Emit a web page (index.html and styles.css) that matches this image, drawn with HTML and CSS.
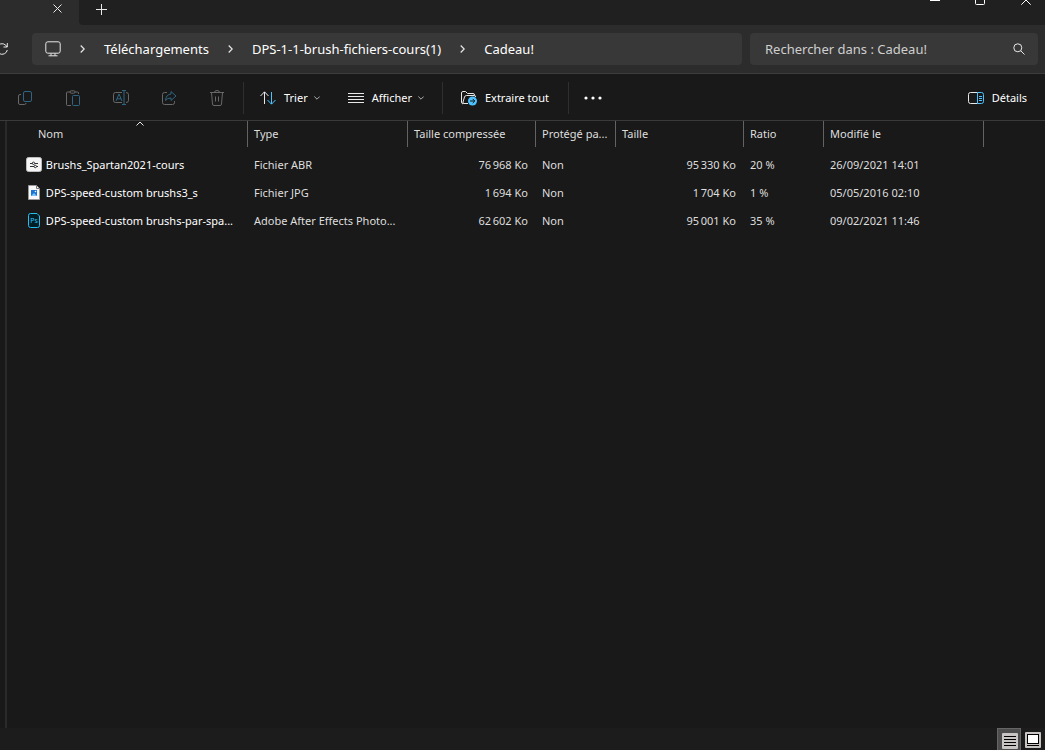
FILE: index.html
```html
<!DOCTYPE html>
<html lang="fr">
<head>
    <meta charset="UTF-8">
    <meta name="viewport" content="width=device-width, initial-scale=1.0">
    <title>Cadeau!</title>
    <link rel="stylesheet" href="styles.css">
</head>
<body>
    <header class="title-bar">
        <div class="tab">
            <button class="tab-close" aria-label="Fermer l'onglet">
                <svg width="9" height="9" viewBox="0 0 9 9"><path d="M.5 .5l8 8M8.500 .5l-8 8"/></svg>
            </button>
        </div>
        <div class="tab-strip">
            <button class="tab-new" aria-label="Nouvel onglet">
                <svg width="11" height="11" viewBox="0 0 11 11"><path d="M5.500 0v11M0 5.500h11"/></svg>
            </button>
            <div class="window-buttons">
                <button aria-label="Réduire"><svg width="10" height="5" viewBox="0 0 10 5"><path d="M0 .5h10"/></svg></button>
                <button aria-label="Agrandir"><svg width="10" height="5" viewBox="0 0 10 5"><path d="M.5 0v3.500q0 1 1 1h7q1 0 1-1V0"/></svg></button>
                <button aria-label="Fermer"><svg width="10" height="5" viewBox="0 0 10 5"><path d="M.3 4.700L5 0l4.700 4.700"/></svg></button>
            </div>
        </div>
    </header>

    <div class="nav-bar">
        <button class="refresh" aria-label="Actualiser">
            <svg width="12" height="14" viewBox="0 0 12 14"><path d="M11.300 1v4H7.500M11 5A5.300 5.300 0 1 0 11.300 8"/></svg>
        </button>
        <nav class="address">
            <svg class="pc" width="16" height="16" viewBox="0 0 16 16"><rect x=".8" y=".8" width="14.400" height="11.400" rx="2"/><path d="M6 12.500v2M10 12.500v2M3.500 14.800h9"/></svg>
            <svg class="sep" width="5" height="8" viewBox="0 0 5 8"><path d="M.7 .5L4.200 4 .7 7.500"/></svg>
            <a href="#">Téléchargements</a>
            <svg class="sep" width="5" height="8" viewBox="0 0 5 8"><path d="M.7 .5L4.200 4 .7 7.500"/></svg>
            <a href="#">DPS-1-1-brush-fichiers-cours(1)</a>
            <svg class="sep" width="5" height="8" viewBox="0 0 5 8"><path d="M.7 .5L4.200 4 .7 7.500"/></svg>
            <a href="#">Cadeau!</a>
        </nav>
        <div class="search">
            <input type="text" aria-label="Rechercher" placeholder="Rechercher dans : Cadeau!">
            <svg width="12" height="12" viewBox="0 0 12 12"><circle cx="4.800" cy="4.800" r="4"/><path d="M7.800 7.800l3.700 3.700"/></svg>
        </div>
    </div>

    <div class="toolbar">
        <button class="tool" disabled aria-label="Copier">
            <svg width="16" height="16" viewBox="0 0 16 16"><path d="M4 4.500H3q-1.500 0-1.500 1.500v7q0 1.500 1.500 1.500h4.500q1.500 0 1.500-1.500"/><rect class="blue" x="6.500" y="1.500" width="8" height="10" rx="1.500"/></svg>
        </button>
        <button class="tool" disabled aria-label="Coller">
            <svg width="16" height="16" viewBox="0 0 16 16"><path d="M5 2H2.500q-1 0-1 1v11.500q0 1 1 1H6M10 2h2.500q1 0 1 1v1"/><rect x="5" y=".8" width="5" height="2.400" rx="1.200"/><rect class="blue" x="7.500" y="5.500" width="7" height="10" rx="1"/></svg>
        </button>
        <button class="tool" disabled aria-label="Renommer">
            <svg width="16" height="16" viewBox="0 0 16 16"><path d="M9 2.500H2.500q-2 0-2 2v6q0 2 2 2H9M13 2.500q2.500 0 2.500 2v6q0 2-2.500 2"/><path class="blue" d="M3 11l3-7 3 7M4 8.800h4M9 .5h4M9 14.500h4M11 .5v14"/></svg>
        </button>
        <button class="tool" disabled aria-label="Partager">
            <svg width="16" height="16" viewBox="0 0 16 16"><path d="M6 2.500H3.500q-2 0-2 2v8q0 2 2 2h8q2 0 2-2V11"/><path class="blue" d="M10 1.500L15 6l-5 4.500V8Q6.500 7.800 4.500 10.500 5 4.500 10 4z"/></svg>
        </button>
        <button class="tool" disabled aria-label="Supprimer">
            <svg width="16" height="16" viewBox="0 0 16 16"><path d="M1 2.500h14M5.500 2.500q0-2 2.500-2t2.500 2M2.500 2.500l1 11.500q0 1.500 1.500 1.500h6q1.500 0 1.500-1.500l1-11.500M6.500 6.500v5M9.500 6.500v5"/></svg>
        </button>
        <span class="divider"></span>
        <button class="command">
            <svg width="16" height="14" viewBox="0 0 16 14"><path d="M4.500 13V1M.5 5l4-4.200 4 4.200"/><path class="blue" d="M11.500 1v12M7.500 9l4 4.200 4-4.200"/></svg>
            Trier
            <svg class="chevron" width="6" height="4" viewBox="0 0 6 4"><path d="M.3 .5L3 3.200 5.700 .5"/></svg>
        </button>
        <button class="command">
            <svg width="16" height="12" viewBox="0 0 16 12"><path d="M0 1.500h16M0 4.500h16M0 7.500h16M0 10.500h16"/></svg>
            Afficher
            <svg class="chevron" width="6" height="4" viewBox="0 0 6 4"><path d="M.3 .5L3 3.200 5.700 .5"/></svg>
        </button>
        <span class="divider"></span>
        <button class="command extract">
            <svg width="16" height="16" viewBox="0 0 16 16"><path d="M2 14q-1.500-.5-1.500-2V3q0-1.500 1.500-1.500h2.500l2 2H12q1.500 0 1.500 1.500M7 13.500H3q-1.500 0-1-1.500l1.500-5Q4 5.500 5.500 5.500H13q2 0 1.500 1.500"/><circle class="badge" cx="11.500" cy="11" r="4.500"/><path class="badge-arrow" d="M9 11h4.500M11.700 8.900l2.100 2.100-2.100 2.100"/></svg>
            Extraire tout
        </button>
        <span class="divider"></span>
        <button class="command more" aria-label="Voir plus">
            <svg width="18" height="4" viewBox="0 0 18 4"><circle cx="2" cy="2" r="1.600"/><circle cx="9" cy="2" r="1.600"/><circle cx="16" cy="2" r="1.600"/></svg>
        </button>
        <button class="command details">
            <svg width="16" height="12" viewBox="0 0 16 12"><path d="M9.500 .5h-7q-2 0-2 2v7q0 2 2 2h7"/><path class="blue" d="M9.500 .5h4q2 0 2 2v7q0 2-2 2h-4zM11 4.500h3M11 6.500h3M11 8.500h3"/></svg>
            Détails
        </button>
    </div>

    <main class="content">
        <table class="files">
            <colgroup>
                <col class="col-name"><col class="col-wide"><col class="col-size"><col class="col-small">
                <col class="col-size"><col class="col-small"><col class="col-wide"><col>
            </colgroup>
            <thead>
                <tr>
                    <th class="sorted">Nom
                        <svg class="sort-mark" width="8" height="5" viewBox="0 0 8 5"><path d="M.5 4.500L4 1l3.500 3.500"/></svg>
                    </th>
                    <th>Type</th>
                    <th>Taille compressée</th>
                    <th>Protégé pa...</th>
                    <th>Taille</th>
                    <th>Ratio</th>
                    <th>Modifié le</th>
                    <td></td>
                </tr>
            </thead>
            <tbody>
                <tr>
                    <td class="name">
                        <svg width="16" height="16" viewBox="0 0 16 16"><rect x=".5" y=".5" width="15" height="14" rx="2" fill="#f5f5f5" stroke="#bdbdbd"/><path d="M4 6.500h2.500M9 6.500h3M4 9.500h4M10.500 9.500H12" stroke="#333"/><circle cx="7.500" cy="6.300" r="1.200" stroke="#333"/><circle cx="9.300" cy="9.500" r="1.200" stroke="#333"/></svg>
                        Brushs_Spartan2021-cours
                    </td>
                    <td>Fichier ABR</td>
                    <td class="num">76&#8239;968 Ko</td>
                    <td>Non</td>
                    <td class="num">95&#8239;330 Ko</td>
                    <td>20 %</td>
                    <td>26/09/2021 14:01</td>
                    <td></td>
                </tr>
                <tr>
                    <td class="name">
                        <svg width="16" height="16" viewBox="0 0 16 16"><path d="M2.500 .5h8l3 3v11h-11z" fill="#f8f8f8" stroke="#9a9a9a"/><path d="M10.500 .5v3h3" stroke="#777"/><rect x="5" y="5" width="6" height="6" fill="#1976d2" stroke="none"/><path d="M5 11l3-3 3 3z" fill="#7cc4fa" stroke="none"/><circle cx="9.500" cy="6.500" r=".8" fill="#fff" stroke="none"/></svg>
                        DPS-speed-custom brushs3_s
                    </td>
                    <td>Fichier JPG</td>
                    <td class="num">1&#8239;694 Ko</td>
                    <td>Non</td>
                    <td class="num">1&#8239;704 Ko</td>
                    <td>1 %</td>
                    <td>05/05/2016 02:10</td>
                    <td></td>
                </tr>
                <tr>
                    <td class="name">
                        <svg width="16" height="16" viewBox="0 0 16 16"><path d="M4.500 .5H11l2.500 2.500v9.500q0 2-2 2h-7q-2 0-2-2V2.500q0-2 2-2z" fill="#001e26" stroke="#26c0f0"/><text class="ps" x="8" y="10" text-anchor="middle">Ps</text></svg>
                        DPS-speed-custom brushs-par-spa...
                    </td>
                    <td>Adobe After Effects Photo...</td>
                    <td class="num">62&#8239;602 Ko</td>
                    <td>Non</td>
                    <td class="num">95&#8239;001 Ko</td>
                    <td>35 %</td>
                    <td>09/02/2021 11:46</td>
                    <td></td>
                </tr>
            </tbody>
        </table>
    </main>

    <footer class="status-bar">
        <button class="view active" aria-label="Vue détaillée">
            <svg width="16" height="16" viewBox="0 0 16 16"><rect width="16" height="16" rx="1" fill="#c8c4c4" stroke="none"/><path d="M2 3.500h12M2 6.500h12M2 9.500h12M2 12.500h12" stroke="#000"/></svg>
        </button>
        <button class="view" aria-label="Grandes icônes">
            <svg width="16" height="16" viewBox="0 0 16 16"><rect width="16" height="16" rx="1" fill="#c8c4c4" stroke="none"/><rect x="2.500" y="2.500" width="11" height="9" fill="#fff" stroke="#000"/><path d="M2 13.500h12" stroke="#000"/></svg>
        </button>
    </footer>
</body>
</html>
```

FILE: styles.css
```css
* {
    box-sizing: border-box;
}

body {
    margin: 0;
    min-height: 100vh;
    display: flex;
    flex-direction: column;
    background: #191919;
    color: #fff;
    font-family: "Noto Sans", "Open Sans", sans-serif;
    font-size: 11px;
    line-height: 16px;
}

button {
    display: flex;
    align-items: center;
    justify-content: center;
    padding: 0;
    border: none;
    background: none;
    color: inherit;
    font: inherit;
}

svg {
    flex: none;
    fill: none;
    stroke: #e8e8e8;
}

/* onglets */
.title-bar {
    display: flex;
    height: 25px;
    background: #2c2c2c;
}

.tab {
    width: 79px;
    padding: 4px 17px 0 0;
    display: flex;
    justify-content: flex-end;
    align-items: flex-start;
}

.tab-close {
    height: 9px;
}

.tab-strip {
    flex: 1;
    display: flex;
    justify-content: space-between;
    align-items: flex-start;
    background: #202020;
    border-bottom-left-radius: 4px;
}

.tab-new {
    padding: 4px 17px;
}

.window-buttons {
    display: flex;
}

.window-buttons button {
    width: 45px;
    height: 5px;
}

.window-buttons button:last-child {
    width: 43px;
    padding-left: 5px;
}

.window-buttons svg {
    stroke: #fff;
}

/* barre d'adresse */
.nav-bar {
    display: flex;
    align-items: center;
    height: 49px;
    padding-right: 7px;
    background: #2c2c2c;
    border-bottom: 1px solid #3d3d3d;
    font-size: 13px;
}

.refresh {
    width: 32px;
    justify-content: flex-start;
    margin-left: -4px;
    margin-right: 4px;
}

.address,
.search {
    display: flex;
    align-items: center;
    height: 32px;
    background: #383838;
    border-radius: 4px;
}

.address {
    flex: 1;
    padding-left: 13px;
    gap: 19px;
}

.address a {
    color: #fff;
    text-decoration: none;
}

.sep {
    stroke-width: 1.2;
}

.search {
    width: 288px;
    margin-left: 8px;
    padding: 0 13px 0 15px;
}

.search input {
    flex: 1;
    min-width: 0;
    padding: 0;
    border: none;
    outline: none;
    background: none;
    color: #fff;
    font: inherit;
}

.search input::placeholder {
    color: #cfcfcf;
}

/* commandes */
.toolbar {
    display: flex;
    align-items: center;
    height: 47px;
    padding: 2px 18px 0 1px;
    border-bottom: 1px solid #3a3a3a;
}

.tool {
    width: 48px;
}

.tool svg {
    stroke: #686868;
}

.blue {
    stroke: #4cc2ff;
}

.tool .blue {
    stroke: #2f6580;
}

.divider {
    width: 1px;
    height: 32px;
    margin-left: 6px;
    background: #2f2f2f;
}

.tool + .divider {
    margin-left: 2px;
}

.command {
    gap: 8px;
    padding: 0 12px 0 16px;
}

.chevron {
    stroke: #b0b0b0;
    margin-left: -2px;
}

.extract {
    padding: 0 13px 0 18px;
}

.more {
    padding: 0 15px;
}

.more svg {
    fill: #fff;
    stroke: none;
}

.details {
    margin-left: auto;
    padding: 0;
}

.badge {
    fill: #4cc2ff;
    stroke: none;
}

.badge-arrow {
    stroke: #101010;
}

/* liste des fichiers */
.content {
    flex: 1;
    margin-left: 5px;
    border-left: 2px solid #2a2a2a;
}

.files {
    width: 100%;
    table-layout: fixed;
    border-spacing: 0;
}

.col-name { width: 241px; }
.col-wide { width: 160px; }
.col-size { width: 128px; }
.col-small { width: 80px; }

.files th {
    height: 26px;
    padding: 0 0 0 6px;
    border-right: 1px solid #636363;
    color: #dedede;
    font-weight: normal;
    text-align: left;
    white-space: nowrap;
}

.files .sorted {
    position: relative;
    padding-left: 31px;
}

.sort-mark {
    position: absolute;
    top: 0;
    left: 129px;
}

.files tbody::before {
    content: "";
    display: block;
    height: 4px;
}

.files td {
    height: 28px;
    padding: 0 0 0 6px;
    color: #dedede;
    white-space: nowrap;
}

.files thead td {
    height: 26px;
}

.files .name {
    padding-left: 19px;
    color: #fff;
}

.name svg {
    margin-right: 1px;
    vertical-align: -4px;
}

.files .num {
    padding: 0 8px 0 0;
    text-align: right;
}

.ps {
    fill: #31c5f0;
    stroke: none;
    font-size: 7px;
}

/* barre d'état */
.status-bar {
    display: flex;
    justify-content: flex-end;
    height: 22px;
    background: #1c1c1c;
}

.view {
    width: 24px;
    height: 22px;
    align-items: flex-start;
    padding-top: 4px;
}

.view.active {
    background: #4d4d4d;
    border: 1px solid #666;
    border-bottom: none;
    padding-left: 2px;
}
```
